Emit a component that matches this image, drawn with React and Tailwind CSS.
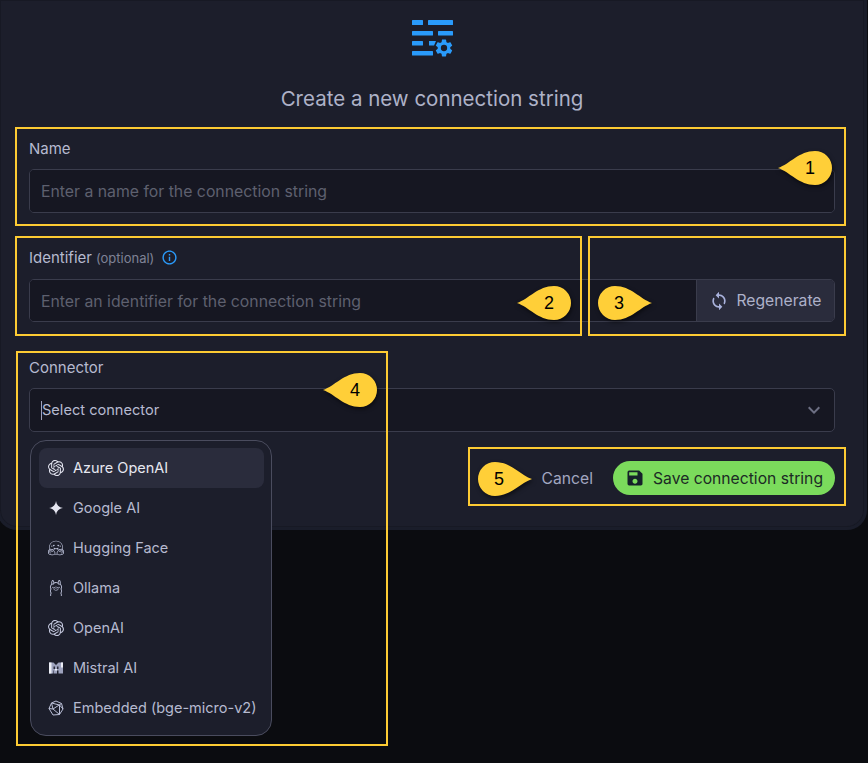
import React from "react";
import { MdSync, MdSave, MdInfoOutline, MdKeyboardArrowDown } from "react-icons/md";
import { SiOpenai, SiHuggingface, SiOllama } from "react-icons/si";

function HeaderIcon() {
  return (
    <svg width="42" height="37" viewBox="0 0 42 37" fill="#2a9bfb">
      <rect x="0" y="0" width="11" height="5" rx="0.5" />
      <rect x="16" y="0" width="25" height="5" rx="0.5" />
      <rect x="0" y="11" width="21" height="4.5" rx="0.5" />
      <rect x="26" y="11" width="15" height="4.5" rx="0.5" />
      <rect x="0" y="21" width="11" height="4.5" rx="0.5" />
      <path d="M17 21h7l-2 4.500h-5z" />
      <rect x="0" y="31" width="21" height="4.5" rx="0.5" />
      <svg x="21.500" y="17.500" width="21" height="21" viewBox="0 0 24 24">
        <path d="M19.14 12.94c.04-.3.06-.61.06-.94s-.02-.64-.07-.94l2.03-1.58a.49.49 0 0 0 .12-.61l-1.92-3.32a.49.49 0 0 0-.59-.22l-2.39.96c-.5-.38-1.03-.7-1.62-.94l-.36-2.54a.48.48 0 0 0-.48-.41h-3.84c-.24 0-.43.17-.47.41l-.36 2.54c-.59.24-1.13.57-1.62.94l-2.39-.96a.49.49 0 0 0-.59.22L2.74 8.87c-.12.21-.08.47.12.61l2.03 1.58c-.05.3-.09.63-.09.94s.02.64.07.94l-2.03 1.58a.49.49 0 0 0-.12.61l1.92 3.32c.12.22.37.29.59.22l2.39-.96c.5.38 1.03.7 1.62.94l.36 2.54c.05.24.24.41.48.41h3.84c.24 0 .44-.17.47-.41l.36-2.54c.59-.24 1.13-.56 1.62-.94l2.39.96c.22.08.47 0 .59-.22l1.92-3.32c.12-.22.07-.47-.12-.61l-2.01-1.58zM12 15.6A3.6 3.6 0 1 1 12 8.4a3.6 3.6 0 0 1 0 7.2z" />
      </svg>
    </svg>
  );
}

function GoogleStar() {
  return (
    <svg width="16" height="16" viewBox="0 0 16 16" fill="#e4e5f0">
      <path d="M8 1c.6 4 2.800 6.300 7 7-4.200.7-6.400 3-7 7-.6-4-2.800-6.300-7-7 4.200-.7 6.400-3 7-7z" />
    </svg>
  );
}

function Mistral() {
  return (
    <svg width="16" height="16" viewBox="0 0 16 16">
      <path fill="#9da2bd" d="M1 2.500h4.500L8 5l2.500-2.500H15v11h-4.500v-3H9v3H5.500v-3H5v3H1z" />
      <path fill="#2a2c3c" d="M5.500 6.500h1.500v2.500H5.500zM9 6.500h1.500v2.500H9z" />
      <path fill="#eceef6" d="M1 2.500h2.500v11H1zM13 2.500h2v5h-2zM7 9h2v1.500H7z" />
    </svg>
  );
}

function Embedded() {
  return (
    <svg width="16" height="16" viewBox="0 0 16 16" fill="none" stroke="#b9bed6" strokeWidth="1">
      <path d="M8 1l5.500 2.500L15 9l-3.500 5.500L5 15 1 8.500 3.500 3z" />
      <path d="M3.500 3L11.500 5l0 9.500M13.500 3.500L5 9l6.500 5.500M1 8.500L5 9 3.500 3M15 9l-3.500-4" />
    </svg>
  );
}

function Callout({ n, side, className }) {
  const path =
    side === "left"
      ? "M0 18 C12 14 21 1 37 1 A17 17 0 0 1 37 35 C21 35 12 22 0 18 Z"
      : "M54 18 C42 14 33 1 17 1 A17 17 0 0 0 17 35 C33 35 42 22 54 18 Z";
  return (
    <div className={`absolute w-[54px] h-[36px] ${className}`}>
      <svg width="54" height="36" viewBox="0 0 54 36" className="absolute inset-0 overflow-visible drop-shadow-[1px_2px_2px_rgba(0,0,0,0.55)]">
        <path d={path} fill="#ffcf38" />
      </svg>
      <span className={`absolute top-0 h-[36px] leading-[36px] text-[18px] text-black font-['Liberation_Sans',sans-serif] ${side === "left" ? "left-[27px]" : "left-[16px]"}`}>
        {n}
      </span>
    </div>
  );
}

const items = [
  { label: "Azure OpenAI", icon: <SiOpenai size={16} color="#e4e5f0" />, active: true },
  { label: "Google AI", icon: <GoogleStar /> },
  { label: "Hugging Face", icon: <SiHuggingface size={16} color="#b9bed6" /> },
  { label: "Ollama", icon: <SiOllama size={16} color="#b9bed6" /> },
  { label: "OpenAI", icon: <SiOpenai size={16} color="#c4c8de" /> },
  { label: "Mistral AI", icon: <Mistral /> },
  { label: "Embedded (bge-micro-v2)", icon: <Embedded /> },
];

const inputClass =
  "block w-full bg-[#161722] text-[15.800px] px-[11px] outline-none placeholder:text-[#5e606f] font-['Inter',sans-serif]";

export default function App() {
  return (
    <div className="relative w-[868px] h-[763px] overflow-hidden bg-[#0b0c10] font-['Inter',sans-serif]">
      <div className="h-[530px] -ml-[3px] mr-[1px] rounded-b-[20px] bg-[#1c1e2b] border-b-[3px] border-r-[3px] border-l-[3px] border-[#1a1d2a] shadow-[inset_0_0_0_1px_#171924] pl-[29px] pr-[29px]">
        <div className="flex justify-center pt-[20px] h-[57px] pl-[1px]">
          <HeaderIcon />
        </div>
        <h1 className="mt-[28px] text-center text-[20.500px] leading-[28px] font-normal text-[#aeb2c8]">
          Create a new connection string
        </h1>

        <label className="block mt-[26px] text-[15px] leading-[20px] text-[#b6bad0]">Name</label>
        <div className="mt-[10px] h-[44px] rounded-[5px] border border-[#3a3c4c] bg-[#161722] overflow-hidden">
          <input className={`${inputClass} h-full`} placeholder="Enter a name for the connection string" />
        </div>

        <div className="mt-[35px] flex items-center h-[20px] text-[15px] leading-[20px] text-[#b6bad0]">
          <span>Identifier</span>
          <span className="ml-[4px] text-[13px] text-[#7f8296]">(optional)</span>
          <MdInfoOutline size={17} color="#2a9bfb" className="ml-[7px] mb-[2px]" />
        </div>
        <div className="mt-[11px] flex h-[43px] rounded-[5px] border border-[#3a3c4c] bg-[#161722] overflow-hidden">
          <input className={`${inputClass} flex-1 h-full pt-[2px]`} placeholder="Enter an identifier for the connection string" />
          <button className="flex items-center justify-center gap-[7px] w-[138px] shrink-0 border-l border-[#3a3c4c] bg-[#2a2c3c] text-[15.700px] text-[#adb1c9]">
            <MdSync size={20} color="#a9b2dc" />
            <span className="mt-[1px]">Regenerate</span>
          </button>
        </div>

        <label className="block mt-[36px] text-[15px] leading-[20px] text-[#b6bad0]">Connector</label>
        <div className="relative mt-[10px] flex items-center justify-between h-[44px] rounded-[5px] border border-[#3a3c4c] bg-[#161722] pl-[11px] pr-[8px]">
          <span className="border-l border-[#9ea2bd] text-[14.600px] leading-[19px] mt-[1px] text-[#b6bad0]">Select connector</span>
          <MdKeyboardArrowDown size={24} color="#6d7084" />
        </div>

        <div className="flex justify-end items-center gap-[20px] mt-[29px]">
          <button className="text-[15.700px] text-[#a2a6c0] pt-[1px]">Cancel</button>
          <button className="flex items-center gap-[8px] h-[34px] w-[222px] pl-[12px] rounded-full bg-[#7bdb5c] text-[15.700px] text-[#1b2a25]">
            <MdSave size={20} color="#16212a" />
            <span className="mt-[1px]">Save connection string</span>
          </button>
        </div>
      </div>

      <div className="absolute left-[30px] top-[440px] w-[242px] h-[296px] rounded-[16px] border border-[#4a4c5e] bg-[#1c1e2b] pt-[7px] pl-[8px] pr-[7px]">
        {items.map((it) => (
          <div
            key={it.label}
            className={`flex items-center gap-[9px] h-[40px] pl-[9px] rounded-[8px] text-[14.500px] whitespace-nowrap pb-[1px] ${
              it.active ? "bg-[#2a2c3c] text-[#e6e7f0]" : "text-[#b6bad0]"
            }`}
          >
            <span className="w-[16px] h-[16px] flex items-center justify-center shrink-0">{it.icon}</span>
            {it.label}
          </div>
        ))}
      </div>

      <div className="absolute left-[15px] top-[127px] w-[831px] h-[99px] border-2 border-[#fdcb33]" />
      <div className="absolute left-[15px] top-[236px] w-[567px] h-[100px] border-2 border-[#fdcb33]" />
      <div className="absolute left-[588px] top-[236px] w-[258px] h-[100px] border-2 border-[#fdcb33]" />
      <div className="absolute left-[16px] top-[351px] w-[372px] h-[395px] border-2 border-[#fdcb33]" />
      <div className="absolute left-[468px] top-[447px] w-[378px] h-[59px] border-2 border-[#fdcb33]" />

      <Callout n="1" side="left" className="left-[778px] top-[150px]" />
      <Callout n="2" side="left" className="left-[517px] top-[285px]" />
      <Callout n="3" side="right" className="left-[598px] top-[285px]" />
      <Callout n="4" side="left" className="left-[323px] top-[372px]" />
      <Callout n="5" side="right" className="left-[478px] top-[461px]" />
    </div>
  );
}
